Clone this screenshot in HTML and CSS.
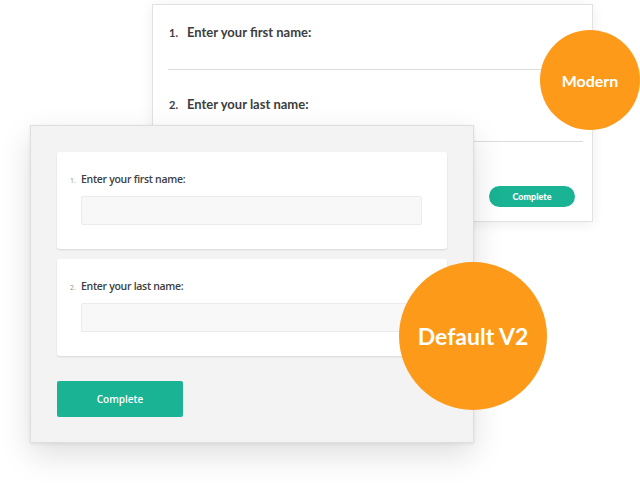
FILE: index.html
```html
<!DOCTYPE html>
<html>
<head>
<meta charset="utf-8">
<link rel="stylesheet" href="styles.css">
</head>
<body>
<div class="stage">
  <div class="modern">
    <div class="m-item m-first">
      <div class="m-label"><span class="m-num">1.</span>Enter your first name:</div>
    </div>
    <div class="m-item">
      <div class="m-label"><span class="m-num">2.</span>Enter your last name:</div>
    </div>
    <div class="m-foot"><span class="m-btn">Complete</span></div>
  </div>
  <div class="badge badge-modern">Modern</div>

  <div class="v2">
    <div class="v2-card">
      <div class="v2-label"><span class="v2-num">1.</span>Enter your first name:</div>
      <div class="v2-input"></div>
    </div>
    <div class="v2-card">
      <div class="v2-label"><span class="v2-num">2.</span>Enter your last name:</div>
      <div class="v2-input"></div>
    </div>
    <div class="v2-btn">Complete</div>
  </div>
  <div class="badge badge-v2">Default V2</div>
</div>
</body>
</html>
```

FILE: styles.css
```css
* { box-sizing: border-box; }
html, body { margin: 0; padding: 0; background: #fff; }
body { width: 640px; height: 494px; overflow: hidden; }

.stage { position: relative; width: 640px; height: 494px; }

/* Modern theme window */
.modern {
  position: absolute;
  left: 152px;
  top: 4px;
  width: 441px;
  height: 218px;
  background: #fff;
  border: 1px solid #e2e2e2;
  box-shadow: 0 2px 12px rgba(0,0,0,0.07);
  font-family: "Lato", "Liberation Sans", sans-serif;
  display: flex;
  flex-direction: column;
}
.m-item {
  margin: 0 9px 0 15px;
  padding: 25px 0 28px 1px;
  border-bottom: 1px solid #dcdcdc;
}
.m-item.m-first { padding-top: 18px; }
.m-label {
  font-size: 13px;
  line-height: 18px;
  height: 18px;
  font-weight: 700;
  color: #3d3d3d;
  display: flex;
  align-items: baseline;
}
.m-num { width: 18px; font-size: 11px; }
.m-foot {
  display: flex;
  justify-content: flex-end;
  margin-top: 44px;
  padding-right: 17px;
}
.m-btn {
  width: 86px;
  height: 21px;
  border-radius: 11px;
  background: #1ab394;
  color: #fff;
  font-family: "Lato", sans-serif;
  font-weight: 900;
  font-size: 9px;
  display: flex;
  align-items: center;
  justify-content: center;
}

/* Default V2 window */
.v2 {
  position: absolute;
  left: 30px;
  top: 125px;
  width: 444px;
  background: #f3f3f3;
  border: 1px solid #dedede;
  box-shadow: 0 12px 30px rgba(0,0,0,0.13), 0 1px 3px rgba(0,0,0,0.08);
  padding: 26px 26px 25px;
  font-family: "Open Sans", "Liberation Sans", sans-serif;
  display: flex;
  flex-direction: column;
}
.v2-card {
  background: #fff;
  border-radius: 3px;
  box-shadow: 0 1px 2px rgba(0,0,0,0.12);
  padding: 20px 25px 24px 13px;
}
.v2-card + .v2-card { margin-top: 10px; }
.v2-label {
  display: flex;
  align-items: baseline;
  height: 15px;
  font-size: 10.5px;
  line-height: 15px;
  letter-spacing: -0.3px;
  font-weight: 600;
  color: #404040;
}
.v2-num {
  width: 11px;
  font-size: 7px;
  letter-spacing: 0;
  font-weight: 400;
  color: #909090;
}
.v2-input {
  margin: 9px 0 0 11px;
  height: 29px;
  background: #f8f8f8;
  border: 1px solid #ebebeb;
  border-radius: 2px;
}
.v2-btn {
  margin-top: 25px;
  width: 126px;
  height: 36px;
  border-radius: 2px;
  background: #1ab394;
  color: #fff;
  font-size: 10px;
  font-weight: 600;
  display: flex;
  align-items: center;
  justify-content: center;
}

/* Orange badges */
.badge {
  position: absolute;
  border-radius: 50%;
  background: #fd9a1a;
  color: #fff;
  font-family: "Lato", "Liberation Sans", sans-serif;
  font-weight: 700;
  display: flex;
  align-items: center;
  justify-content: center;
}
.badge-modern {
  left: 540px;
  top: 30px;
  width: 100px;
  height: 100px;
  font-size: 16px;
}
.badge-v2 {
  left: 399px;
  top: 262px;
  width: 148px;
  height: 148px;
  font-size: 23px;
}
```
